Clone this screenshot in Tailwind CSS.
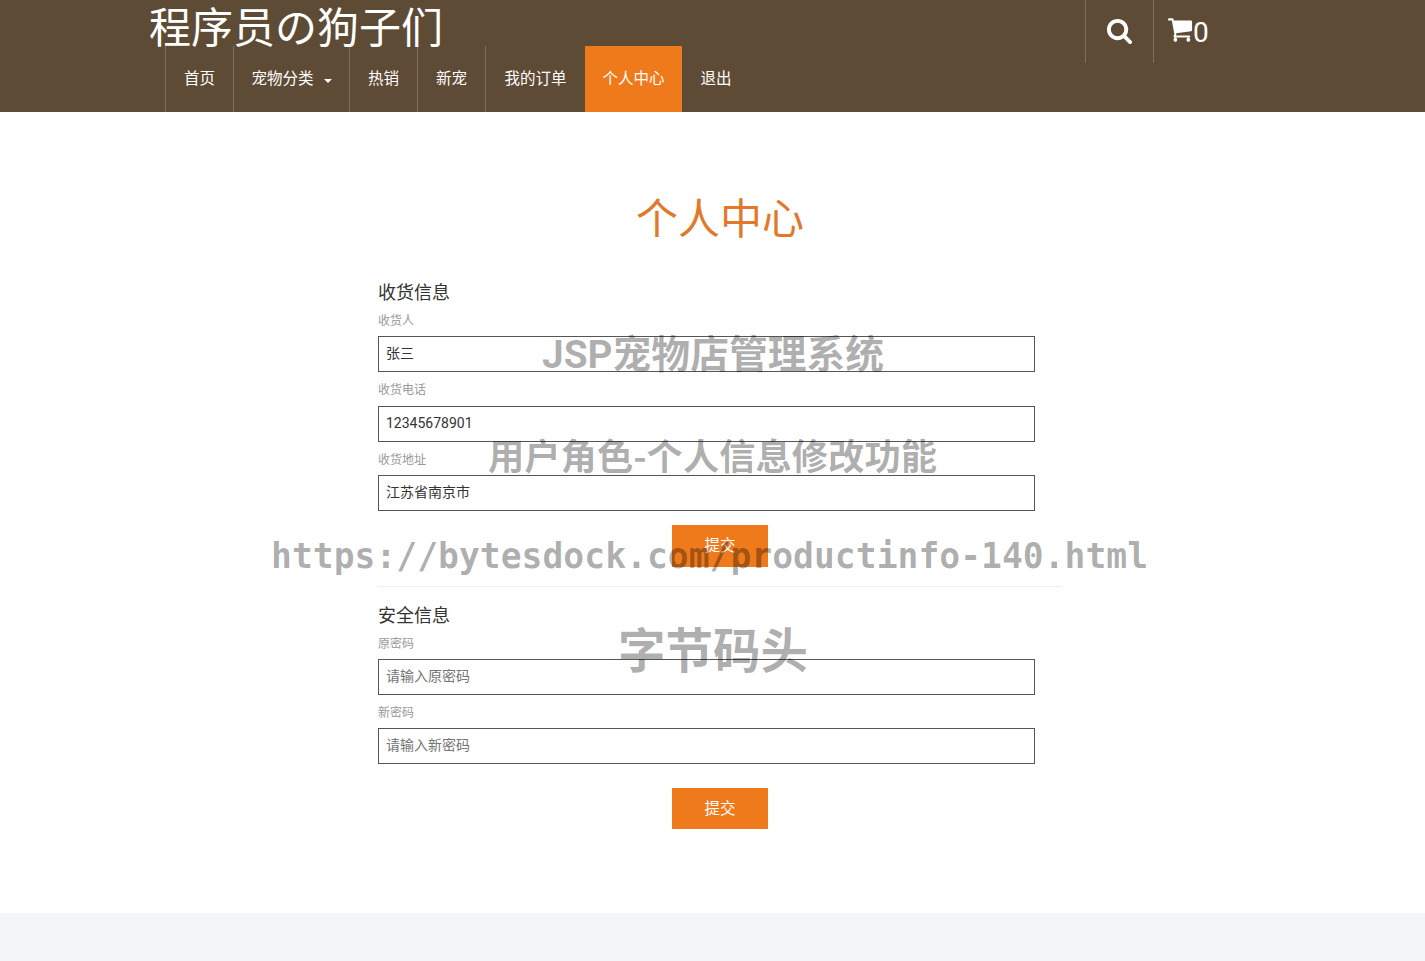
<!DOCTYPE html>
<html lang="zh-CN">
<head>
<meta charset="UTF-8">
<title>个人中心</title>
<script src="https://cdn.jsdelivr.net/npm/@tailwindcss/browser@4"></script>
</head>
<body class="relative h-[961px] overflow-hidden bg-white font-['Roboto','Noto_Sans_CJK_SC',sans-serif] text-[#333]">

<!-- header -->
<header class="flex h-[112px] bg-[#5e4b35] pl-[149px] text-white">
    <div class="w-[936px]">
        <div class="h-[46px] text-[42px] leading-[58px] whitespace-nowrap">程序员の狗子们</div>
        <nav class="ml-4 flex h-[66px] text-[15.5px]">
            <a class="flex w-[68px] items-center justify-center border-l border-white/20 pt-[2px]">首页</a>
            <a class="flex w-[116px] items-center justify-center gap-2.5 border-l border-white/20 pt-[2px]">宠物分类 <span class="mt-0.5 border-x-4 border-t-4 border-x-transparent border-t-white"></span></a>
            <a class="flex w-[68px] items-center justify-center border-l border-white/20 pt-[2px]">热销</a>
            <a class="flex w-[68px] items-center justify-center border-l border-white/20 pt-[2px]">新宠</a>
            <a class="flex w-[100px] items-center justify-center border-l border-white/20 pt-[2px]">我的订单</a>
            <a class="flex w-[97px] items-center justify-center bg-[#ef7a1c] pt-[2px]">个人中心</a>
            <a class="flex w-[68px] items-center justify-center pt-[2px]">退出</a>
        </nav>
    </div>
    <div class="flex h-[63px] w-[68px] items-center justify-center border-l border-white/20 pb-[3px]">
        <svg class="h-[27px] w-[27px]" viewBox="0 0 1792 1792" fill="#fff"><path d="M1216 832q0-185-131.5-316.5t-316.5-131.5-316.5 131.5-131.5 316.5 131.5 316.5 316.5 131.5 316.5-131.5 131.5-316.5zm512 832q0 52-38 90t-90 38q-54 0-90-38l-343-342q-179 124-399 124-143 0-273.5-55.5t-225-150-150-225-55.5-273.5 55.5-273.5 150-225 225-150 273.5-55.5 273.5 55.5 225 150 150 225 55.5 273.5q0 220-124 399l343 343q37 37 37 90z"/></svg>
    </div>
    <div class="flex h-[63px] items-center border-l border-white/20 pl-[13px]">
        <svg class="mb-[5px] h-[30px] w-[26px]" viewBox="0 0 1792 1792" preserveAspectRatio="none" fill="#fff"><path d="M704 1536q0 52-38 90t-90 38-90-38-38-90 38-90 90-38 90 38 38 90zm896 0q0 52-38 90t-90 38-90-38-38-90 38-90 90-38 90 38 38 90zm128-1088v512q0 24-16.5 43.5t-40.5 23.5l-1044 122q13 60 13 70 0 16-24 64h920q26 0 45 19t19 45-19 45-45 19h-1024q-26 0-45-19t-19-45q0-11 8-31.5t16-36 21.5-40 15.5-29.5l-177-823h-204q-26 0-45-19t-19-45 19-45 45-19h256q16 0 28.5 6.5t19.5 15.5 13 24.5 8 26 5.5 29.5 4.5 26h1201q26 0 45 19t19 45z"/></svg>
        <span class="pt-[2px] text-[28px] leading-none">0</span>
    </div>
</header>

<!-- main form -->
<main class="ml-[378px] h-[801px] w-[684px]">
    <h1 class="pt-[81px] text-center text-[42px] leading-[54px] text-[#e2792a]">个人中心</h1>

    <h2 class="mt-[33px] text-[18px] leading-[26px] text-[#333]">收货信息</h2>
    <label class="mt-[7px] block text-[12px] leading-[16px] text-[#999]">收货人</label>
    <input class="mt-[7px] block h-[36px] w-[657px] border border-[#555] px-[7px] pb-[5px] text-[14px] text-[#333]" value="张三">
    <label class="mt-[10px] block text-[12px] leading-[16px] text-[#999]">收货电话</label>
    <input class="mt-2 block h-[36px] w-[657px] border border-[#555] px-[7px] pb-[3px] text-[14px] text-[#333]" value="12345678901">
    <label class="mt-[10px] block text-[12px] leading-[16px] text-[#999]">收货地址</label>
    <input class="mt-[7px] block h-[36px] w-[657px] border border-[#555] px-[7px] pb-[5px] text-[14px] text-[#333]" value="江苏省南京市">
    <button class="mx-auto mt-[14px] block h-[42px] w-[96px] bg-[#ef7a1c] pt-[2px] text-[15.5px] text-white">提交</button>

    <hr class="mt-[19px] border-[#eee]">

    <h2 class="mt-4 text-[18px] leading-[26px] text-[#333]">安全信息</h2>
    <label class="mt-[7px] block text-[12px] leading-[16px] text-[#999]">原密码</label>
    <input class="mt-[7px] block h-[36px] w-[657px] border border-[#555] px-[7px] pb-[3px] text-[14px] placeholder:text-[#757575]" placeholder="请输入原密码">
    <label class="mt-[10px] block text-[12px] leading-[16px] text-[#999]">新密码</label>
    <input class="mt-[7px] block h-[36px] w-[657px] border border-[#555] px-[7px] pb-[3px] text-[14px] placeholder:text-[#757575]" placeholder="请输入新密码">
    <button class="mx-auto mt-6 block h-[41px] w-[96px] bg-[#ef7a1c] pt-[2px] text-[15.5px] text-white">提交</button>
</main>

<footer class="h-[48px] bg-[#f3f6f7]"></footer>

<!-- watermark over the page -->
<div class="pointer-events-none absolute left-[542px] top-[355px] -translate-y-1/2 font-['Roboto','Noto_Sans_CJK_SC',sans-serif] text-[38.8px] leading-none font-bold whitespace-nowrap text-black/33">JSP宠物店管理系统</div>
<div class="pointer-events-none absolute left-[488px] top-[454px] -translate-y-1/2 font-['Noto_Sans_CJK_SC',sans-serif] text-[36.3px] leading-none font-bold whitespace-nowrap text-black/33">用户角色-个人信息修改功能</div>
<div class="pointer-events-none absolute left-[271px] top-[556px] -translate-y-1/2 font-['DejaVu_Sans_Mono',monospace] text-[34.7px] leading-none font-bold whitespace-nowrap text-black/33">https://bytesdock.com/productinfo-140.html</div>
<div class="pointer-events-none absolute left-[618px] top-[648px] -translate-y-1/2 font-['Noto_Sans_CJK_SC',sans-serif] text-[47.5px] leading-none font-bold whitespace-nowrap text-black/33">字节码头</div>

</body>
</html>
